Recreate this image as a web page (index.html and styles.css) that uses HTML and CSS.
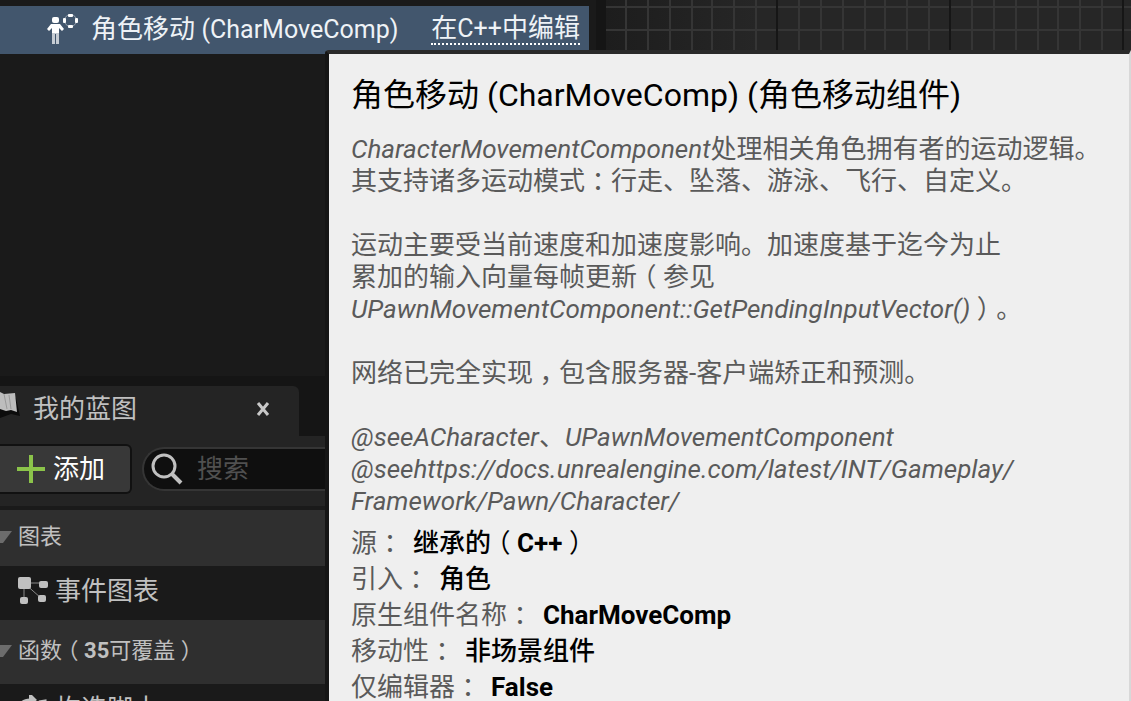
FILE: index.html
```html
<!DOCTYPE html>
<html lang="zh-CN">
<head>
<meta charset="utf-8">
<title>角色移动 (CharMoveComp)</title>
<link rel="stylesheet" href="styles.css">
</head>
<body>
<div class="editor">
  <div class="side">
    <div class="component-row">
      <svg class="person-icon" width="32" height="32" viewBox="0 0 32 32" fill="#fff">
        <rect x="5" y="4" width="7" height="6" rx="2"/>
        <path d="M4 11h9l4 5-2 2-3-3v5H5v-5l-3 3-2-2z"/>
        <path d="M5 20h7v11H9V21H8v10H5z" opacity=".7"/>
        <rect x="21" y="1" width="5" height="3" rx="1"/>
        <rect x="21" y="12" width="5" height="3" rx="1"/>
        <rect x="16" y="5" width="3" height="5" rx="1"/>
        <rect x="28" y="5" width="3" height="5" rx="1"/>
        <circle cx="23.500" cy="7.500" r="6" fill="none" stroke="#fff" opacity=".4"/>
      </svg>
      <span class="component-name">角色移动 <span class="latin">(CharMoveComp)</span></span>
      <a class="edit-link" href="#">在<span class="latin">C++</span>中编辑</a>
    </div>
    <div class="component-space"></div>
    <section class="blueprint">
      <div class="tabs">
        <div class="tab">
          <svg class="book-icon" width="20" height="30" viewBox="0 0 20 30">
            <path d="M0 5l16 2 4 18-9-2-11 4z" fill="#0c0c0c"/>
            <path d="M0 1l4 2 11-1 2 19-6-2-5 1-6-2z" fill="#bdbdbd"/>
            <path d="M4 3l3 15M9 4l2 14" stroke="#999" fill="none"/>
          </svg>
          <span class="tab-title">我的蓝图</span>
          <button class="close" aria-label="关闭"><svg width="14" height="16" viewBox="0 0 14 16"><path d="M2 2l10 12M12 2L2 14" stroke="#c8c8c8" stroke-width="3"/></svg></button>
        </div>
      </div>
      <div class="tools">
        <button class="add"><svg width="28" height="28" viewBox="0 0 28 28"><path d="M14 0v28M0 14h28" stroke="#8bc34a" stroke-width="4"/></svg>添加</button>
        <label class="search"><svg width="32" height="32" viewBox="0 0 32 32" fill="none" stroke="#c0c0c0" stroke-width="3"><circle cx="13" cy="13" r="11"/><path d="M21 21l9 9" stroke-width="4"/></svg><input type="text" placeholder="搜索" aria-label="搜索"></label>
      </div>
      <div class="group"><svg class="arrow" width="12" height="12" viewBox="0 0 12 12"><path d="M0 0h12L3 12H0z" fill="#6c6c6c"/></svg>图表</div>
      <div class="item">
        <svg width="30" height="28" viewBox="0 0 30 28"><path d="M6 6h19M6 6v18M6 6l17 15" stroke="#888" fill="none"/><g fill="#c0c0c0"><rect width="13" height="12" rx="2"/><rect x="21" y="4" width="9" height="7" rx="2"/><rect x="2" y="20" width="8" height="7" rx="2"/><rect x="20" y="18" width="8" height="7" rx="2"/></g></svg>
        事件图表
      </div>
      <div class="group group-tall"><svg class="arrow" width="12" height="12" viewBox="0 0 12 12"><path d="M0 0h12L3 12H0z" fill="#6c6c6c"/></svg><span>函数<span class="bracket">（</span><b>35</b>可覆盖<span class="bracket">）</span></span></div>
      <div class="item">
        <svg width="30" height="28" viewBox="0 0 30 28" fill="none" stroke="#c0c0c0" stroke-width="3"><path d="M2 12c1-5 4-7 10-7"/><path d="M11-3l8 8-8 6z" fill="#c0c0c0" stroke="none"/><path d="M21 7l6-1v8"/></svg>
        构造脚本
      </div>
    </section>
  </div>
  <div class="graph">
    <svg width="100%" height="100%">
      <defs>
        <pattern id="cells" width="173" height="23" x="170" y="6" patternUnits="userSpaceOnUse">
          <path d="M23 0v23M45 0v23M67 0v23M89 0v23M109 0v23M131 0v23M153 0v23M0 1h173" stroke="#353535" stroke-width="2"/>
          <path d="M1 0v23" stroke="#161616" stroke-width="2"/>
        </pattern>
      </defs>
      <rect width="100%" height="100%" fill="url(#cells)"/>
    </svg>
  </div>
  <aside class="tooltip">
    <h1>角色移动 (CharMoveComp) (角色移动组件)</h1>
    <p><em>CharacterMovementComponent</em>处理相关角色拥有者的运动逻辑。<br>其支持诸多运动模式<span class="bracket">：</span>行走、坠落、游泳、飞行、自定义。</p>
    <p>运动主要受当前速度和加速度影响。加速度基于迄今为止<br>累加的输入向量每帧更新<span class="bracket">（</span>参见<br><em>UPawnMovementComponent::GetPendingInputVector()</em><span class="bracket">）</span>。</p>
    <p>网络已完全实现<span class="bracket">，</span>包含服务器-客户端矫正和预测。</p>
    <p><em>@seeACharacter</em>、<em>UPawnMovementComponent</em><br><em>@seehttps://docs.unrealengine.com/latest/INT/Gameplay/</em><br><em>Framework/Pawn/Character/</em></p>
    <dl>
      <div><dt>源<span class="bracket">：</span></dt><dd>继承的<span class="bracket">（</span><b>C++</b><span class="bracket">）</span></dd></div>
      <div><dt>引入<span class="bracket">：</span></dt><dd>角色</dd></div>
      <div><dt>原生组件名称<span class="bracket">：</span></dt><dd><b>CharMoveComp</b></dd></div>
      <div><dt>移动性<span class="bracket">：</span></dt><dd>非场景组件</dd></div>
      <div><dt>仅编辑器<span class="bracket">：</span></dt><dd><b>False</b></dd></div>
    </dl>
  </aside>
</div>
</body>
</html>
```
FILE: styles.css
```css
* { box-sizing: border-box; }
body {
  margin: 0;
  background: #1a1a1a;
  color: #c0c0c0;
  font: 26px/32px Roboto, "Noto Sans CJK SC", sans-serif;
  text-spacing-trim: space-all;
}
svg { display: block; flex: none; }
button, input { font: inherit; color: inherit; }
.editor {
  position: relative;
  display: flex;
  height: 100vh;
  overflow: hidden;
}
.side {
  flex: 0 0 596px;
  padding-top: 6px;
}
.component-row {
  display: flex;
  align-items: center;
  height: 48px;
  margin-right: 7px;
  padding: 0 9px 2px 47px;
  background: #42566d;
  color: #eef2f6;
}
.component-name { margin-left: 12px; }
.latin { font-size: 25px; }
.edit-link {
  margin-left: auto;
  color: inherit;
  line-height: 28px;
  text-decoration: none;
  border-bottom: 2px dotted #fff;
}
.component-space { height: 322px; }
.blueprint { width: 325px; background: #1a1a1a; }
.tabs { padding-top: 10px; background: #151515; }
.tab {
  display: flex;
  align-items: center;
  width: 299px;
  height: 50px;
  padding: 0 29px 4px 0;
  background: #242424;
  border-radius: 0 6px 0 0;
}
.tab-title { margin-left: 13px; }
.book-icon { align-self: flex-start; margin-top: 5px; }
.close { margin-left: auto; padding: 0; border: 0; background: none; }
.tools {
  display: flex;
  align-items: center;
  gap: 10px;
  height: 70px;
  margin-bottom: 4px;
  padding-bottom: 5px;
  background: #242424;
}
.add {
  display: flex;
  align-items: center;
  gap: 8px;
  width: 132px;
  height: 50px;
  padding: 0 0 0 17px;
  border: 2px solid #111;
  border-left: 0;
  border-radius: 0 6px 6px 0;
  background: #383838;
  color: #fff;
}
.search {
  display: flex;
  flex: 1;
  align-items: center;
  gap: 14px;
  min-width: 0;
  height: 44px;
  padding-left: 7px;
  border: 2px solid #353535;
  border-right: 0;
  border-radius: 22px 0 0 22px;
  background: #0f0f0f;
}
.search input {
  flex: 1;
  min-width: 0;
  padding: 0;
  border: 0;
  outline: 0;
  background: none;
}
.search input::placeholder { color: #505050; opacity: 1; }
.group {
  display: flex;
  align-items: center;
  gap: 6px;
  height: 56px;
  padding-bottom: 2px;
  background: #2f2f2f;
  font-size: 22px;
}
.group-tall { height: 64px; }
.item {
  display: flex;
  align-items: center;
  gap: 7px;
  height: 54px;
  padding: 0 0 4px 18px;
}
.graph {
  flex: 1;
  border-left: 10px solid #151515;
  background: linear-gradient(90deg, #1d1d1d, #262626 150px);
}
.tooltip {
  position: absolute;
  top: 50px;
  right: 0;
  bottom: 0;
  left: 325px;
  padding: 25px 0 0 22px;
  overflow: hidden;
  background: #efefef;
  border: 4px solid #2a2a2a;
  border-width: 4px 2px 0 4px;
  border-color: #2a2a2a #d8d8d8 #151515 #151515;
  border-radius: 4px 0 0 0;
  color: #5a5a5a;
  white-space: nowrap;
}
.tooltip h1 {
  margin: 0 0 22px;
  color: #000;
  font-size: 32px;
  font-weight: 400;
  line-height: 32px;
}
.tooltip p { margin: 0 0 32px; }
.bracket {
  display: inline-block;
  width: 26px;
  font-family: "Noto Sans CJK SC", sans-serif;
  font-feature-settings: "halt";
  font-weight: 400;
  line-height: 1;
  text-align: center;
}
.group .bracket { width: 22px; }
.tooltip dl { margin: -24px 0 0; line-height: 36px; }
.tooltip dl div { display: flex; gap: 10px; }
.tooltip dd { margin: 0; color: #000; font-weight: 500; }
.tooltip b { font-weight: 700; }
```
